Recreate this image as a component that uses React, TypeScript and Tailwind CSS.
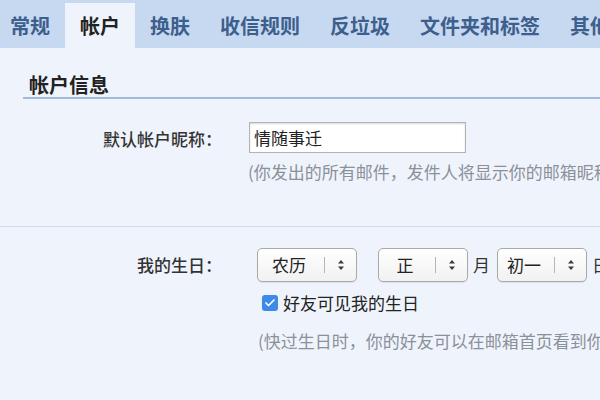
import { Check } from 'lucide-react';

const tabs = ['常规', '帐户', '换肤', '收信规则', '反垃圾', '文件夹和标签', '其他'];

const Arrows = () => (
  <svg width="8" height="12" viewBox="0 0 8 12" className="text-[#3a3a3a]">
    <path d="M4 1 L7 4.6 H1 Z" fill="currentColor" />
    <path d="M4 11 L7 7.4 H1 Z" fill="currentColor" />
  </svg>
);

const Select = ({ value, width }: { value: string; width: string }) => (
  <div className={`${width} shrink-0 h-[34px] flex items-center rounded-[5px] border border-[#a9a9a9] bg-gradient-to-b from-white to-[#f1f1f1] shadow-[0_1px_1px_rgba(0,0,0,0.08)]`}>
    <span className="flex-1 text-center pr-[4px] text-[17px] text-[#222]">{value}</span>
    <span className="w-[32px] h-[16px] flex items-center justify-center border-l border-[#b5b5b5]">
      <Arrows />
    </span>
  </div>
);

const App = () => {
  return (
    <div className="w-[600px] h-[400px] overflow-hidden bg-[#eff4fc] font-['Noto_Sans_CJK_SC',sans-serif] text-[#333]">
      <div className="h-[48px] bg-[#c7d9f0] flex items-end -ml-[5px] whitespace-nowrap">
        {tabs.map((t, i) => (
          <div
            key={i}
            className={
              i === 1
                ? 'shrink-0 h-[45px] px-[15px] flex items-center bg-[#eff4fc] text-[20px] font-bold text-[#222]'
                : 'shrink-0 h-[45px] px-[15px] flex items-center text-[20px] font-bold text-[#3d5f8e]'
            }
          >
            {t}
          </div>
        ))}
      </div>

      <div className="mt-[25px] ml-[23px] pl-[6px] border-b-2 border-[#a3bbd6] text-[20px] leading-[24px] font-bold text-[#222]">
        帐户信息
      </div>

      <div className="mt-[23px] flex items-center">
        <div className="w-[222px] shrink-0 text-right text-[17px] font-medium pt-[3px]">默认帐户昵称：</div>
        <div className="ml-[27px] w-[217px] h-[31px] shrink-0 flex items-center px-[4px] bg-white border border-[#b3b3b3] shadow-[inset_0_1px_2px_rgba(0,0,0,0.15)] text-[17px] text-[#222]">
          情随事迁
        </div>
      </div>
      <div className="mt-[8px] pl-[248px] text-[17px] leading-[22px] text-[#8b9099] whitespace-nowrap">
        (你发出的所有邮件，发件人将显示你的邮箱昵称)
      </div>

      <div className="mt-[43px] h-px bg-[#d6dce5]" />

      <div className="mt-[21px] flex items-center whitespace-nowrap">
        <div className="w-[222px] shrink-0 text-right text-[17px] font-medium">我的生日：</div>
        <div className="ml-[35px] shrink-0 flex items-center">
          <Select value="农历" width="w-[100px]" />
          <div className="ml-[21px] shrink-0">
            <Select value="正" width="w-[90px]" />
          </div>
          <span className="ml-[5px] mr-[7px] shrink-0 text-[17px]">月</span>
          <Select value="初一" width="w-[90px]" />
          <span className="ml-[5px] shrink-0 text-[17px]">日</span>
        </div>
      </div>

      <div className="mt-[10px] pl-[262px] flex items-center h-[22px]">
        <span className="w-[16px] h-[16px] shrink-0 rounded-[3px] bg-[#3d8ae8] flex items-center justify-center">
          <Check className="w-[12px] h-[12px] text-white" strokeWidth={3.5} />
        </span>
        <span className="ml-[5px] text-[17px] text-[#222] whitespace-nowrap">好友可见我的生日</span>
      </div>
      <div className="mt-[16px] pl-[258px] text-[17px] leading-[22px] text-[#8b9099] whitespace-nowrap">
        (快过生日时，你的好友可以在邮箱首页看到你的生日提醒)
      </div>
    </div>
  );
};

export default App;
